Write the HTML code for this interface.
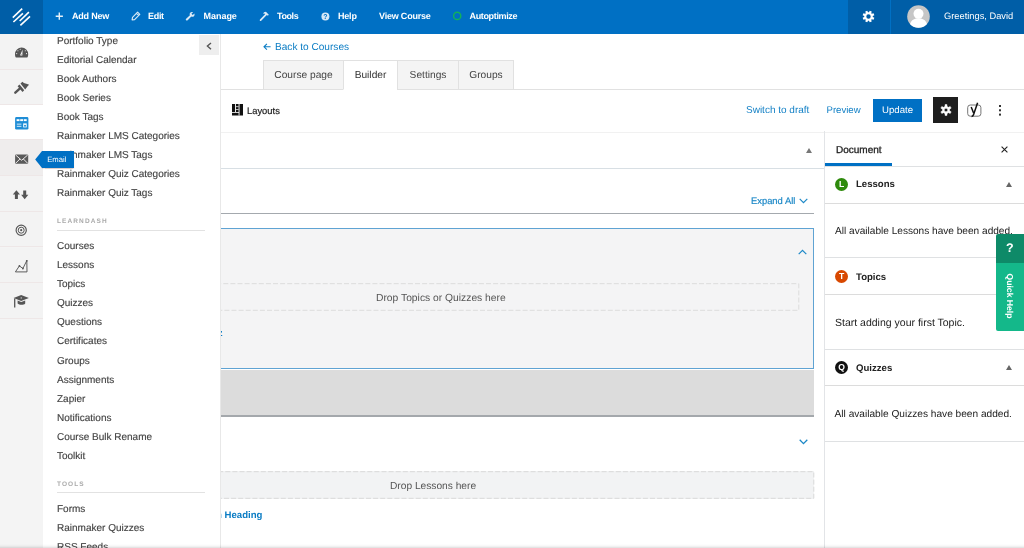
<!DOCTYPE html>
<html>
<head>
<meta charset="utf-8">
<title>Course Builder</title>
<style>
*{box-sizing:border-box;margin:0;padding:0}
html,body{text-rendering:geometricPrecision;width:1024px;height:548px;overflow:hidden;background:#fff;font-family:"Liberation Sans",sans-serif;}
body{position:relative}
.abs{position:absolute}
/* top bar */
#topbar,#fly,#main,#iconbar{will-change:transform}
#topbar{position:absolute;left:0;top:0;width:1024px;height:34px;background:#0070c4;z-index:50}
#logo{position:absolute;left:0;top:0;width:43px;height:34px;background:#005ea7}
.tn{position:absolute;top:0;height:34px;line-height:33px;color:#fff;font-size:9px;font-weight:bold;white-space:nowrap;letter-spacing:-0.2px}
#gearblk{position:absolute;left:848px;top:0;width:42px;height:34px;background:#005ea7}
#userblk{position:absolute;left:891px;top:0;width:133px;height:34px;background:#005ea7}
/* icon sidebar */
#iconbar{position:absolute;left:0;top:34px;width:43px;height:514px;background:#f4f4f4;z-index:30}
.ib{position:absolute;left:0;width:43px;background:#f3f3f3;border-bottom:1px solid #eee7e7}
/* flyout */
#fly{position:absolute;left:43px;top:34px;width:178px;height:514px;background:#fff;z-index:20;border-right:1.5px solid #e8e8e8;overflow:hidden}
.mi{position:absolute;left:14px;font-size:10px;color:#444;-webkit-text-stroke:0.15px #444;white-space:nowrap;line-height:14px}
.mh{position:absolute;left:14px;font-size:6.5px;color:#aaa;letter-spacing:1.1px;font-weight:bold;line-height:8px}
.ml{position:absolute;left:14px;width:148px;height:1px;background:#e2e2e2}
/* main */
#main{position:absolute;left:220px;top:34px;width:804px;height:514px;background:#fff;z-index:10;overflow:hidden}
.link{color:#0a7cc4}
.hl{position:absolute;height:1px;background:#dfe1e3}
.ptxt{position:absolute;font-size:10.1px;color:#222;white-space:nowrap;line-height:12px}
.ph{position:absolute;font-size:9.6px;font-weight:bold;color:#222;white-space:nowrap;line-height:12px}
.tri{position:absolute;width:0;height:0;border-left:3px solid transparent;border-right:3px solid transparent;border-bottom:5px solid #666}
.circ{position:absolute;width:13.3px;height:13.3px;border-radius:50%;color:#fff;font-size:8.6px;font-weight:bold;text-align:center;line-height:13.6px}

.tab{position:absolute;top:26px;height:30px;border:1px solid #e1e1e1;background:#f4f4f4;color:#444;font-size:10.2px;line-height:29px;text-align:center;white-space:nowrap}
.tab.act{background:#fff;border-bottom-color:#fff;color:#333}
.dash{background:#f4f4f5}
</style>
</head>
<body>

<!-- ============ TOP BAR ============ -->
<div id="topbar">
  <div id="logo">
    <svg class="abs" style="left:0;top:0" width="43" height="34" viewBox="0 0 43 34"><g stroke="#fff" stroke-width="1.6" stroke-linecap="butt"><line x1="12.8" y1="17.6" x2="22.2" y2="8.7"/><line x1="13.4" y1="22" x2="22.9" y2="13.3"/><line x1="19.7" y1="21" x2="28.9" y2="12.1"/><line x1="20.4" y1="25.4" x2="30" y2="16.3"/></g></svg>
  </div>

  <svg class="abs" style="left:55px;top:11.6px;opacity:.9" width="9" height="9" viewBox="0 0 9 9"><path d="M4.3 0.6 V7.8 M0.7 4.2 H7.9" stroke="#fff" stroke-width="1.4" fill="none"/></svg>
  <svg class="abs" style="left:130.5px;top:11.2px;opacity:.85" width="10" height="10" viewBox="0 0 10 10"><path d="M6.6 1.2 L8.8 3.4 L3.6 8.6 L1.1 9 L1.5 6.4 Z M5.6 2.3 L7.7 4.4" stroke="#fff" stroke-width="1.15" fill="none" stroke-linejoin="round"/></svg>
  <svg class="abs" style="left:185.3px;top:11.3px;opacity:.85" width="10.4" height="10.4" viewBox="0 0 11 11"><path d="M9.9 2.6 L8.2 4.3 L6.8 2.9 L8.5 1.2 C7.2 0.7 5.9 1.1 5.3 2.1 C4.8 2.9 4.9 3.8 5.2 4.4 L1.2 8.3 C0.7 8.8 0.7 9.5 1.2 9.9 C1.6 10.3 2.3 10.3 2.8 9.8 L6.7 5.9 C7.5 6.3 8.6 6.2 9.4 5.5 C10.1 4.8 10.3 3.6 9.9 2.6 Z" fill="#fff"/></svg>
  <svg class="abs" style="left:258.6px;top:11.3px;opacity:.85" width="10.6" height="10.6" viewBox="0 0 11 11"><path d="M5.2 1.4 L7.2 0.9 L10.2 3.9 L9.2 4.9 L8.3 4.1 L7.6 4.7 L2.3 10 C1.9 10.4 1.3 10.4 1 10 C0.6 9.7 0.6 9.1 1 8.7 L6.3 3.4 L5.6 2.7 L4.2 2.9 Z" fill="#fff"/></svg>
  <svg class="abs" style="left:321px;top:12px" width="9" height="9" viewBox="0 0 9 9"><circle cx="4.4" cy="4.4" r="4" fill="#d6e8f6"/><text x="4.4" y="7" font-family="Liberation Sans" font-weight="bold" font-size="7" fill="#0070c4" text-anchor="middle">?</text></svg>
  <svg class="abs" style="left:452px;top:11px" width="10" height="10" viewBox="0 0 10 10"><circle cx="5.2" cy="4.9" r="3.6" fill="none" stroke="#12b25a" stroke-width="1.4"/></svg>
  <div class="tn" style="left:72px">Add New</div>
  <div class="tn" style="left:148px;letter-spacing:-0.3px">Edit</div>
  <div class="tn" style="left:203.6px;letter-spacing:-0.05px">Manage</div>
  <div class="tn" style="left:277px;letter-spacing:-0.4px">Tools</div>
  <div class="tn" style="left:338px">Help</div>
  <div class="tn" style="left:379px">View Course</div>
  <div class="tn" style="left:469.5px;letter-spacing:-0.35px">Autoptimize</div>
  <div id="gearblk"><svg class="abs" style="left:14.4px;top:10.2px" width="13" height="13" viewBox="0 0 13 13"><path fill="#fff" fill-rule="evenodd" d="M10.78 6.92 L12.36 7.79 L11.55 9.73 L9.82 9.23 L9.23 9.82 L9.73 11.55 L7.79 12.36 L6.92 10.78 L6.08 10.78 L5.21 12.36 L3.27 11.55 L3.77 9.82 L3.18 9.23 L1.45 9.73 L0.64 7.79 L2.22 6.92 L2.22 6.08 L0.64 5.21 L1.45 3.27 L3.18 3.77 L3.77 3.18 L3.27 1.45 L5.21 0.64 L6.08 2.22 L6.92 2.22 L7.79 0.64 L9.73 1.45 L9.23 3.18 L9.82 3.77 L11.55 3.27 L12.36 5.21 L10.78 6.08 Z M8.70 6.50 A2.2 2.2 0 1 0 4.30 6.50 A2.2 2.2 0 1 0 8.70 6.50 Z"/></svg></div>
  <div id="userblk">
    <svg class="abs" style="left:15.5px;top:5px" width="23" height="23" viewBox="0 0 23 23"><defs><clipPath id="avc"><circle cx="11.5" cy="11.5" r="11.3"/></clipPath></defs><circle cx="11.5" cy="11.5" r="11.3" fill="#c6c6c6"/><g clip-path="url(#avc)" fill="#fff"><circle cx="11.5" cy="8.7" r="5"/><path d="M2.4 23 C2.4 15.6 7 13.2 11.5 13.2 C16 13.2 20.6 15.6 20.6 23 Z"/></g></svg>
    <div class="tn" style="left:53px;font-weight:normal;font-size:9.3px;letter-spacing:0">Greetings, David</div>
  </div>
</div>

<!-- ============ ICON SIDEBAR ============ -->
<div id="iconbar">
  <div class="ib" style="top:0.0px;height:35.5px;background:#f3f3f3"></div>
  <div class="ib" style="top:35.5px;height:35.3px;background:#f3f3f3"></div>
  <div class="ib" style="top:70.8px;height:35.3px;background:#fff"></div>
  <div class="ib" style="top:106.1px;height:35.9px;background:#efeded"></div>
  <div class="ib" style="top:142.0px;height:35.6px;background:#f3f3f3"></div>
  <div class="ib" style="top:177.6px;height:35.9px;background:#f3f3f3"></div>
  <div class="ib" style="top:213.5px;height:35.1px;background:#f3f3f3"></div>
  <div class="ib" style="top:248.6px;height:36.4px;background:#f3f3f3"></div>

  <!-- gauge -->
  <svg class="abs" style="left:14px;top:12px" width="16" height="13" viewBox="0 0 16 13"><path d="M1 8.2 A6.6 6.6 0 0 1 14.2 8.2 C14.2 9.6 13.9 11.4 13 11.4 H2.2 C1.3 11.4 1 9.6 1 8.2 Z" fill="#555"/><g fill="#f3f3f3"><circle cx="2.7" cy="7.6" r="0.55"/><circle cx="3.9" cy="4.8" r="0.55"/><circle cx="6.2" cy="3.2" r="0.55"/><circle cx="11.3" cy="4.8" r="0.55"/><circle cx="12.5" cy="7.6" r="0.55"/><path d="M8.6 3.6 L8.4 8.4 A1.1 1.1 0 1 1 6.6 8 Z"/></g><circle cx="7.5" cy="9.1" r="0.5" fill="#555"/></svg>
  <!-- brush -->
  <svg class="abs" style="left:13px;top:47px" width="17" height="14" viewBox="0 0 17 14"><path d="M2.3 11.7 L7 7.4" stroke="#555" stroke-width="2.4" stroke-linecap="round" fill="none"/><path d="M4.6 5.2 L6.5 3.4 L11.2 9.2 L9.5 11 Z" fill="#555"/><path d="M7.5 2.5 L9.4 0.8 C10.4 1.8 11.3 2.3 12.4 2.6 C13.6 3 14.8 3.4 16.1 3.7 C15.3 4.5 14.8 5 14.2 5.8 L12.2 8.4 Z" fill="#555"/></svg>
  <!-- layout (active) -->
  <svg class="abs" style="left:15px;top:83px" width="14" height="13" viewBox="0 0 14 13"><rect x="0.1" y="0.1" width="13.3" height="12.5" rx="1.3" fill="#1f8dd6"/><g fill="#fff"><rect x="1.6" y="2.2" width="2.9" height="1.9"/><rect x="5.2" y="2.2" width="2.9" height="1.9"/><rect x="8.8" y="2.2" width="2.9" height="1.9"/><rect x="8.2" y="6.4" width="3.5" height="4" /><rect x="1.8" y="6.6" width="4.6" height="1.1" opacity=".75"/><rect x="1.8" y="8.8" width="4.6" height="1.1" opacity=".75"/></g><rect x="9.1" y="7.9" width="1.8" height="1.7" fill="#1f8dd6"/></svg>
  <!-- envelope -->
  <svg class="abs" style="left:15px;top:120px" width="14" height="10" viewBox="0 0 14 10"><rect x="0.1" y="0.5" width="13.1" height="9.3" rx="0.8" fill="#5a5a5a"/><path d="M0.6 1 L6.65 6.3 L12.7 1 M0.6 9.3 L4.9 5 M12.7 9.3 L8.4 5" stroke="#f0eded" stroke-width="1" fill="none"/></svg>
  <!-- arrows -->
  <svg class="abs" style="left:12px;top:156px" width="18" height="10" viewBox="0 0 18 10"><path d="M4.4 0.2 L8 4.6 H5.9 V9 H2.9 V4.6 H0.8 Z" fill="#555"/><path d="M12.7 9.2 L16.3 4.8 H14.2 V0.4 H11.2 V4.8 H9.1 Z" fill="#555"/></svg>
  <!-- target -->
  <svg class="abs" style="left:15px;top:190px" width="13" height="13" viewBox="0 0 13 13"><circle cx="6.2" cy="6.2" r="5.1" fill="none" stroke="#555" stroke-width="1.15"/><circle cx="6.2" cy="6.2" r="3" fill="none" stroke="#555" stroke-width="1"/><circle cx="6.2" cy="6.2" r="1.1" fill="#555"/></svg>
  <!-- chart -->
  <svg class="abs" style="left:14px;top:225px" width="15" height="14" viewBox="0 0 15 14"><path d="M1.4 12.9 L5.4 6.9 L8.9 9.5 L12.8 1.6 L13 12.9 Z" fill="none" stroke="#555" stroke-width="0.95" stroke-linejoin="round"/><g fill="#555"><circle cx="5.4" cy="6.9" r="0.9"/><circle cx="8.9" cy="9.5" r="0.9"/><circle cx="12.8" cy="1.8" r="0.9"/></g></svg>
  <!-- grad cap -->
  <svg class="abs" style="left:13px;top:260px" width="17" height="14" viewBox="0 0 17 14"><path d="M8.2 1.1 L15.9 4.1 L8.2 7.1 L0.6 4.1 Z" fill="#555"/><path d="M4.6 6.6 L8.2 8.1 L12.2 6.5 V9.4 C10.8 11.3 6.4 11.3 4.6 9.6 Z" fill="#555"/><path d="M1.7 4.4 V13.6" stroke="#555" stroke-width="1.3" fill="none"/><circle cx="8.2" cy="3.9" r="0.6" fill="#f3f3f3"/></svg>
</div>


<!-- tooltip -->
<div class="abs" style="left:0;top:0;z-index:40;will-change:transform">
  <div class="abs" style="left:42.2px;top:150.9px;width:31.7px;height:16.9px;background:#0070c4;box-shadow:0 0.5px 1px rgba(120,60,40,.25)"></div>
  <svg class="abs" style="left:35.4px;top:150.9px" width="7" height="17" viewBox="0 0 7 17"><path d="M7 0 L0.2 8.45 L7 16.9 Z" fill="#0070c4"/></svg>
  <div class="abs" style="left:47.2px;top:154.7px;font-size:7.7px;line-height:10px;color:#fff;white-space:nowrap">Email</div>
</div>

<!-- ============ FLYOUT MENU ============ -->
<div id="fly">
  <div class="mi" style="top:0.5px">Portfolio Type</div>
  <div class="mi" style="top:19.6px">Editorial Calendar</div>
  <div class="mi" style="top:38.7px">Book Authors</div>
  <div class="mi" style="top:57.8px">Book Series</div>
  <div class="mi" style="top:76.9px">Book Tags</div>
  <div class="mi" style="top:95.9px">Rainmaker LMS Categories</div>
  <div class="mi" style="top:115.0px">Rainmaker LMS Tags</div>
  <div class="mi" style="top:134.1px">Rainmaker Quiz Categories</div>
  <div class="mi" style="top:153.2px">Rainmaker Quiz Tags</div>
  <div class="mi" style="top:206.0px">Courses</div>
  <div class="mi" style="top:225.1px">Lessons</div>
  <div class="mi" style="top:244.2px">Topics</div>
  <div class="mi" style="top:263.3px">Quizzes</div>
  <div class="mi" style="top:282.4px">Questions</div>
  <div class="mi" style="top:301.4px">Certificates</div>
  <div class="mi" style="top:320.5px">Groups</div>
  <div class="mi" style="top:339.6px">Assignments</div>
  <div class="mi" style="top:358.7px">Zapier</div>
  <div class="mi" style="top:377.8px">Notifications</div>
  <div class="mi" style="top:396.9px">Course Bulk Rename</div>
  <div class="mi" style="top:416.0px">Toolkit</div>
  <div class="mi" style="top:468.5px">Forms</div>
  <div class="mi" style="top:487.6px">Rainmaker Quizzes</div>
  <div class="mi" style="top:506.7px">RSS Feeds</div>
  <div class="mh" style="top:183.8px">LEARNDASH</div>
  <div class="ml" style="top:196px"></div>
  <div class="mh" style="top:447px">TOOLS</div>
  <div class="ml" style="top:458px"></div>
  <div class="abs" style="left:156px;top:0.5px;width:20.4px;height:20.4px;background:#eee"><svg class="abs" style="left:7px;top:7px" width="7" height="8" viewBox="0 0 7 8"><path d="M5 0.9 L1.4 4.1 L5 7.3" fill="none" stroke="#555" stroke-width="1.4"/></svg></div>
</div>

<!-- ============ MAIN ============ -->
<div id="main">
  <!-- back link -->
  <svg class="abs" style="left:43px;top:9px" width="9" height="8" viewBox="0 0 9 8"><path d="M1 3.8 H7.6 M3.9 0.9 L1 3.8 L3.9 6.7" fill="none" stroke="#0a7cc4" stroke-width="1.1"/></svg>
  <div class="abs link" style="left:55px;top:6.8px;font-size:10.1px;line-height:14px;white-space:nowrap">Back to Courses</div>
  <!-- tabs -->
  <div class="hl" style="left:0;top:55px;width:804px;background:#e1e1e1"></div>
  <div class="tab" style="left:43px;width:81px">Course page</div>
  <div class="tab act" style="left:123px;width:55px">Builder</div>
  <div class="tab" style="left:177px;width:62px">Settings</div>
  <div class="tab" style="left:238px;width:56px">Groups</div>
  <!-- editor header -->
  <svg class="abs" style="left:12px;top:70.1px" width="11" height="12" viewBox="0 0 11 12"><rect width="11" height="11.5" fill="#111"/><g fill="#fff"><rect x="3" y="0" width="0.9" height="8"/><rect x="0" y="8" width="7" height="0.8"/><rect x="6.6" y="0" width="0.9" height="11.5"/><rect x="3.9" y="2.4" width="2.7" height="0.7"/><rect x="3.9" y="5" width="2.7" height="0.7"/></g></svg>
  <div class="abs" style="left:27px;top:70.7px;font-size:9.4px;line-height:12px;color:#222;-webkit-text-stroke:0.2px #222">Layouts</div>
  <div class="abs link" style="left:526px;top:71.2px;font-size:10px;line-height:12px;white-space:nowrap;color:#1481c6">Switch to draft</div>
  <div class="abs link" style="left:606.5px;top:71.2px;font-size:9.6px;line-height:12px;color:#1481c6">Preview</div>
  <div class="abs" style="left:653px;top:65px;width:49px;height:23px;background:#0070c4;color:#fff;font-size:9.6px;line-height:23px;text-align:center">Update</div>
  <div class="abs" style="left:713px;top:63.4px;width:25.3px;height:25.4px;background:#1e1e1e"><svg class="abs" style="left:6.6px;top:6.8px" width="12" height="12" viewBox="0 0 12 12"><path fill="#fff" fill-rule="evenodd" stroke="#fff" stroke-width="0.5" stroke-linejoin="round" d="M7.03 9.55 L6.97 11.41 L5.03 11.41 L4.97 9.55 L3.44 8.67 L1.80 9.55 L0.83 7.86 L2.41 6.88 L2.41 5.12 L0.83 4.14 L1.80 2.45 L3.44 3.33 L4.97 2.45 L5.03 0.59 L6.97 0.59 L7.03 2.45 L8.56 3.33 L10.20 2.45 L11.17 4.14 L9.59 5.12 L9.59 6.88 L11.17 7.86 L10.20 9.55 L8.56 8.67 Z M7.80 6.00 A1.8 1.8 0 1 0 4.20 6.00 A1.8 1.8 0 1 0 7.80 6.00 Z"/></svg></div>
  <svg class="abs" style="left:746px;top:68px" width="17" height="16" viewBox="0 0 17 16"><rect x="1.7" y="3" width="13.2" height="11.2" rx="2.6" fill="none" stroke="#666" stroke-width="0.9"/><path d="M11.6 0.8 L7.6 12.6 C7.2 13.8 6.6 14.4 5.6 14.5" fill="none" stroke="#111" stroke-width="1.5"/><path d="M5.2 5 L7.6 11" fill="none" stroke="#111" stroke-width="1.5"/></svg>
  <div class="abs" style="left:778.8px;top:71.2px;width:1.8px;height:1.8px;background:#333;box-shadow:0 4.3px 0 #333,0 8.6px 0 #333"></div>
  <div class="hl" style="left:0;top:97.5px;width:804px;background:#f1f1f1"></div>
  <!-- metabox row -->
  <div class="tri" style="left:586px;top:114px;border-bottom-color:#777"></div>
  <div class="hl" style="left:0;top:134px;width:604px;background:#d8dfe4"></div>
  <!-- builder -->
  <div class="abs" style="left:531px;top:160.8px;font-size:9.4px;line-height:12px;color:#1c88c7;white-space:nowrap;-webkit-text-stroke:0.2px #1c88c7">Expand All</div>
  <svg class="abs" style="left:579px;top:164px" width="9" height="6" viewBox="0 0 9 6"><path d="M0.7 0.8 L4.5 4.6 L8.3 0.8" fill="none" stroke="#1c88c7" stroke-width="1.2"/></svg>
  <div class="abs" style="left:0;top:179px;width:594px;height:1.4px;background:#a4a9ae"></div>
  <!-- lesson box -->
  <div class="abs" style="left:-2px;top:194px;width:596px;height:141px;border:1px solid #5fa3d3;background:#f4f4f5"></div>
  <svg class="abs" style="left:578px;top:215px" width="9" height="6" viewBox="0 0 9 6"><path d="M0.7 5.2 L4.5 1.4 L8.3 5.2" fill="none" stroke="#1c88c7" stroke-width="1.2"/></svg>
  <div class="abs dash" style="left:-10px;top:249px;width:589.3px;height:28px"><svg class="abs" style="left:0;top:0" width="590" height="28" viewBox="0 0 590 28"><rect x="-5" y="0.7" width="593.8" height="26.6" fill="none" stroke="#dcdcdc" stroke-width="1" stroke-dasharray="5 2.1" stroke-dashoffset="3"/></svg></div>
  <div class="abs" style="left:156px;top:258.8px;font-size:10.3px;line-height:12px;color:#555;white-space:nowrap">Drop Topics or Quizzes here</div>
  <div class="abs" style="left:-2.3px;top:293.6px;font-size:9.6px;line-height:12px;font-weight:bold;color:#0a7cc4">z</div>
  <!-- gray block -->
  <div class="abs" style="left:0;top:335.5px;width:594px;height:46px;background:#dcdcdc"></div>
  <div class="abs" style="left:0;top:381px;width:594px;height:1.6px;background:#a4a8ac"></div>
  <!-- second lesson -->
  <svg class="abs" style="left:579px;top:405px" width="9" height="6" viewBox="0 0 9 6"><path d="M0.7 0.8 L4.5 4.6 L8.3 0.8" fill="none" stroke="#1c88c7" stroke-width="1.3"/></svg>
  <div class="abs dash" style="left:-10px;top:437px;width:604.3px;height:28px;background:#f2f3f4"><svg class="abs" style="left:0;top:0" width="605" height="28" viewBox="0 0 605 28"><rect x="-5" y="0.7" width="608.8" height="26.6" fill="none" stroke="#d9d9d9" stroke-width="1" stroke-dasharray="5 2.1" stroke-dashoffset="1"/></svg></div>
  <div class="abs" style="left:170px;top:446.7px;font-size:10.2px;line-height:12px;color:#555;white-space:nowrap">Drop Lessons here</div>
  <div class="abs" style="left:-4px;top:475.6px;font-size:9.6px;line-height:12px;font-weight:bold;color:#0a7cc4;white-space:nowrap">n Heading</div>

  <!-- right sidebar -->
  <div class="abs" style="left:604px;top:97px;width:1px;height:420px;background:#e2e4e7"></div>
  <div class="abs" style="left:616px;top:110.8px;font-size:10px;line-height:12px;color:#222;-webkit-text-stroke:0.3px #222">Document</div>
  <div class="abs" style="left:605px;top:129.4px;width:67.2px;height:3px;background:#0070c4"></div>
  <div class="hl" style="left:605px;top:132.4px;width:199px"></div>
  <svg class="abs" style="left:781px;top:112px" width="7" height="7" viewBox="0 0 7 7"><path d="M0.6 0.6 L6.4 6.4 M6.4 0.6 L0.6 6.4" stroke="#222" stroke-width="1.1"/></svg>

  <div class="circ" style="left:615px;top:144px;background:#2e8a0c">L</div>
  <div class="ph" style="left:636px;top:145.3px">Lessons</div>
  <div class="tri" style="left:786px;top:148px"></div>
  <div class="hl" style="left:605px;top:169px;width:199px;background:#dcdcdc"></div>
  <div class="ptxt" style="left:615px;top:191.6px">All available Lessons have been added.</div>
  <div class="hl" style="left:605px;top:223.2px;width:199px"></div>

  <div class="circ" style="left:615px;top:235.5px;background:#d84800">T</div>
  <div class="ph" style="left:636px;top:237.8px">Topics</div>
  <div class="hl" style="left:605px;top:259.5px;width:199px;background:#dcdcdc"></div>
  <div class="ptxt" style="left:615px;top:283px;font-size:10.5px">Start adding your first Topic.</div>
  <div class="hl" style="left:605px;top:315px;width:199px"></div>

  <div class="circ" style="left:615px;top:327px;background:#111">Q</div>
  <div class="ph" style="left:636px;top:328.8px">Quizzes</div>
  <div class="tri" style="left:786px;top:331px"></div>
  <div class="hl" style="left:605px;top:351px;width:199px;background:#dcdcdc"></div>
  <div class="ptxt" style="left:614.6px;top:375.2px;font-size:10.15px">All available Quizzes have been added.</div>
  <div class="hl" style="left:605px;top:406.5px;width:199px"></div>

  <!-- quick help -->
  <div class="abs" style="left:775.7px;top:199.8px;width:28.3px;height:28.8px;background:#0e8a68;color:#fff;font-size:12.5px;font-weight:bold;line-height:28px;text-align:center;border-radius:2px 0 0 0">?</div>
  <div class="abs" style="left:775.7px;top:228.6px;width:28.3px;height:68px;background:#14b88a;border-radius:0 0 0 2px"></div>
  <div class="abs" style="left:776px;top:228px;width:68px;height:28px;transform-origin:0 0;transform:translateX(28px) rotate(90deg);color:#fff;font-size:8.6px;font-weight:bold;line-height:28px;text-align:center;white-space:nowrap">Quick Help</div>

  <!-- bottom shadow -->
</div>

<div class="abs" style="left:0;top:544px;width:1024px;height:4px;z-index:60;background:linear-gradient(to bottom,rgba(0,0,0,0),rgba(0,0,0,.03) 50%,rgba(0,0,0,.13))"></div>
</body>
</html>
